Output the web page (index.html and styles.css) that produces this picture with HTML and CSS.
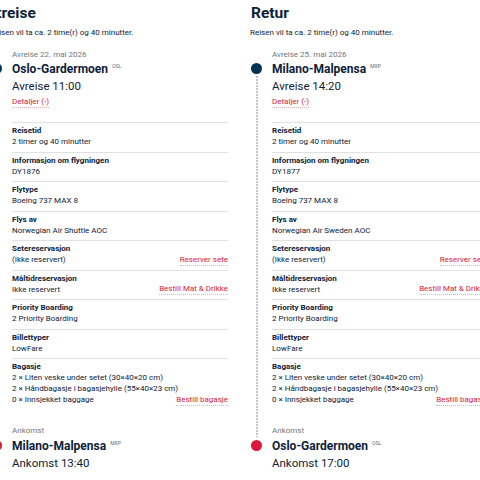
FILE: index.html
```html
<!DOCTYPE html>
<html lang="no">
<head>
<meta charset="utf-8">
<link rel="stylesheet" href="styles.css">
</head>
<body>
<div class="legs">
  <section class="leg">
    <h2 class="leg-title leg-title--first">Utreise</h2>
    <p class="leg-duration">Reisen vil ta ca. 2 time(r) og 40 minutter.</p>
    <div class="timeline">
      <div class="stop">
        <div class="stop-meta">Avreise 22. mai 2026</div>
        <div class="stop-name stop-name--dep">Oslo-Gardermoen <sup>OSL</sup></div>
        <div class="stop-time">Avreise 11:00</div>
        <a class="link link--details">Detaljer (-)</a>
      </div>
      <ul class="details">
        <li class="row"><div class="row-main"><div class="row-label">Reisetid</div><div>2 timer og 40 minutter</div></div></li>
        <li class="row"><div class="row-main"><div class="row-label">Informasjon om flygningen</div><div>DY1876</div></div></li>
        <li class="row"><div class="row-main"><div class="row-label">Flytype</div><div>Boeing 737 MAX 8</div></div></li>
        <li class="row"><div class="row-main"><div class="row-label">Flys av</div><div>Norwegian Air Shuttle AOC</div></div></li>
        <li class="row"><div class="row-main"><div class="row-label">Setereservasjon</div><div>(Ikke reservert)</div></div><a class="link">Reserver sete</a></li>
        <li class="row"><div class="row-main"><div class="row-label">Måltidreservasjon</div><div>Ikke reservert</div></div><a class="link">Bestill Mat &amp; Drikke</a></li>
        <li class="row"><div class="row-main"><div class="row-label">Priority Boarding</div><div>2 Priority Boarding</div></div></li>
        <li class="row"><div class="row-main"><div class="row-label">Billettyper</div><div>LowFare</div></div></li>
        <li class="row row--last"><div class="row-main"><div class="row-label">Bagasje</div><div>2 × Liten veske under setet (30×40×20 cm)</div><div>2 × Håndbagasje i bagasjehylle (55×40×23 cm)</div><div>0 × Innsjekket baggage</div></div><a class="link">Bestill bagasje</a></li>
      </ul>
      <div class="stop stop--arr">
        <div class="stop-meta">Ankomst</div>
        <div class="stop-name stop-name--arr">Milano-Malpensa <sup>MXP</sup></div>
        <div class="stop-time">Ankomst 13:40</div>
      </div>
    </div>
  </section>
  <section class="leg">
    <h2 class="leg-title">Retur</h2>
    <p class="leg-duration">Reisen vil ta ca. 2 time(r) og 40 minutter.</p>
    <div class="timeline">
      <div class="stop">
        <div class="stop-meta">Avreise 25. mai 2026</div>
        <div class="stop-name stop-name--dep">Milano-Malpensa <sup>MXP</sup></div>
        <div class="stop-time">Avreise 14:20</div>
        <a class="link link--details">Detaljer (-)</a>
      </div>
      <ul class="details">
        <li class="row"><div class="row-main"><div class="row-label">Reisetid</div><div>2 timer og 40 minutter</div></div></li>
        <li class="row"><div class="row-main"><div class="row-label">Informasjon om flygningen</div><div>DY1877</div></div></li>
        <li class="row"><div class="row-main"><div class="row-label">Flytype</div><div>Boeing 737 MAX 8</div></div></li>
        <li class="row"><div class="row-main"><div class="row-label">Flys av</div><div>Norwegian Air Sweden AOC</div></div></li>
        <li class="row"><div class="row-main"><div class="row-label">Setereservasjon</div><div>(Ikke reservert)</div></div><a class="link">Reserver sete</a></li>
        <li class="row"><div class="row-main"><div class="row-label">Måltidreservasjon</div><div>Ikke reservert</div></div><a class="link">Bestill Mat &amp; Drikke</a></li>
        <li class="row"><div class="row-main"><div class="row-label">Priority Boarding</div><div>2 Priority Boarding</div></div></li>
        <li class="row"><div class="row-main"><div class="row-label">Billettyper</div><div>LowFare</div></div></li>
        <li class="row row--last"><div class="row-main"><div class="row-label">Bagasje</div><div>2 × Liten veske under setet (30×40×20 cm)</div><div>2 × Håndbagasje i bagasjehylle (55×40×23 cm)</div><div>0 × Innsjekket baggage</div></div><a class="link">Bestill bagasje</a></li>
      </ul>
      <div class="stop stop--arr">
        <div class="stop-meta">Ankomst</div>
        <div class="stop-name stop-name--arr">Oslo-Gardermoen <sup>OSL</sup></div>
        <div class="stop-time">Ankomst 17:00</div>
      </div>
    </div>
  </section>
</div>
</body>
</html>
```
FILE: styles.css
```css
html, body {
  margin: 0;
  padding: 0;
  background: #ffffff;
}
body {
  width: 480px;
  height: 480px;
  overflow: hidden;
  font-family: Roboto, "Noto Sans", sans-serif;
  color: #0e2237;
}
.legs {
  display: flex;
  margin-left: -9px;
}
.leg {
  flex: 0 0 260px;
  width: 260px;
}
.leg-title {
  margin: 3px 0 0 0;
  font-size: 15.5px;
  line-height: 20px;
  font-weight: 700;
}
.leg-title--first {
  margin-left: -5px;
}
.leg-duration {
  margin: 4px 0 0 -1px;
  font-size: 8px;
  line-height: 11px;
}
.timeline {
  position: relative;
  margin-top: 11px;
  padding-left: 21px;
  width: 216px;
  font-size: 8px;
  line-height: 11px;
}
.timeline::before {
  content: "";
  position: absolute;
  left: 4.5px;
  top: 27px;
  bottom: 34px;
  width: 2px;
  background-image: linear-gradient(#c3c6ca 60%, transparent 60%);
  background-size: 2px 3px;
}
.stop-meta {
  color: #73777b;
}
.stop-name {
  position: relative;
  margin-top: 1px;
  font-size: 12px;
  line-height: 16px;
  font-weight: 700;
}
.stop-name::before {
  content: "";
  position: absolute;
  left: -21px;
  top: 2px;
  width: 11px;
  height: 11px;
  border-radius: 50%;
  background: #003251;
  z-index: 1;
}
.stop-name--arr::before {
  background: #d81939;
}
.stop-name sup {
  font-size: 5px;
  font-weight: 400;
  vertical-align: 5px;
  line-height: 0;
  margin-left: 1px;
  color: #5d6873;
}
.stop-time {
  margin-top: 1px;
  font-size: 11.5px;
  line-height: 16px;
}
.link {
  color: #d81939;
  font-size: 8px;
  line-height: 10px;
  border-bottom: 1px dotted #eab0b9;
}
.link--details {
  display: block;
  width: max-content;
  margin-top: 3px;
}
.details {
  list-style: none;
  margin: 14px 0 0 0;
  padding: 0;
}
.row {
  display: grid;
  grid-template-columns: 1fr;
  border-top: 1px solid #dfe1e3;
  padding: 2px 0 4.5px 0;
  white-space: nowrap;
}
.row > .row-main,
.row > .link {
  grid-area: 1 / 1;
}
.row > .link {
  justify-self: end;
  align-self: end;
  margin-bottom: -0.5px;
}
.row--last {
  padding-bottom: 4px;
}
.row-label {
  font-weight: 700;
}
.stop--arr {
  margin-top: 16px;
}
.stop--arr .stop-name {
  margin-top: 2px;
}
```
